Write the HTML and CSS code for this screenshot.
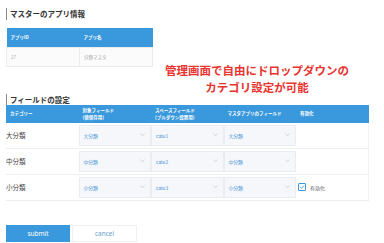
FILE: index.html
```html
<!DOCTYPE html>
<html lang="ja">
<head>
<meta charset="utf-8">
<link rel="stylesheet" href="styles.css">
</head>
<body>
<div class="page">
  <h2 class="section-title first">マスターのアプリ情報</h2>
  <table class="info-table">
    <thead>
      <tr><th>アプリID</th><th>アプリ名</th></tr>
    </thead>
    <tbody>
      <tr><td>27</td><td>分類マスタ</td></tr>
    </tbody>
  </table>

  <p class="callout">管理画面で自由にドロップダウンの<br>カテゴリ設定が可能</p>

  <h2 class="section-title second">フィールドの設定</h2>
  <table class="field-table">
    <thead>
      <tr>
        <th>カテゴリー</th>
        <th>対象フィールド<br>(値保存用)</th>
        <th>スペースフィールド<br>(プルダウン設置用)</th>
        <th>マスタアプリのフィールド</th>
        <th>有効化</th>
      </tr>
    </thead>
    <tbody>
      <tr>
        <td class="label">大分類</td>
        <td><div class="select"><span>大分類</span><svg class="chev" viewBox="0 0 6 4"><polyline points="0.5,0.5 3,3.2 5.5,0.5"/></svg></div></td>
        <td><div class="select"><span>cate1</span><svg class="chev" viewBox="0 0 6 4"><polyline points="0.5,0.5 3,3.2 5.5,0.5"/></svg></div></td>
        <td><div class="select"><span>大分類</span><svg class="chev" viewBox="0 0 6 4"><polyline points="0.5,0.5 3,3.2 5.5,0.5"/></svg></div></td>
        <td></td>
      </tr>
      <tr>
        <td class="label">中分類</td>
        <td><div class="select"><span>中分類</span><svg class="chev" viewBox="0 0 6 4"><polyline points="0.5,0.5 3,3.2 5.5,0.5"/></svg></div></td>
        <td><div class="select"><span>cate2</span><svg class="chev" viewBox="0 0 6 4"><polyline points="0.5,0.5 3,3.2 5.5,0.5"/></svg></div></td>
        <td><div class="select"><span>中分類</span><svg class="chev" viewBox="0 0 6 4"><polyline points="0.5,0.5 3,3.2 5.5,0.5"/></svg></div></td>
        <td></td>
      </tr>
      <tr>
        <td class="label">小分類</td>
        <td><div class="select"><span>小分類</span><svg class="chev" viewBox="0 0 6 4"><polyline points="0.5,0.5 3,3.2 5.5,0.5"/></svg></div></td>
        <td><div class="select"><span>cate3</span><svg class="chev" viewBox="0 0 6 4"><polyline points="0.5,0.5 3,3.2 5.5,0.5"/></svg></div></td>
        <td><div class="select"><span>小分類</span><svg class="chev" viewBox="0 0 6 4"><polyline points="0.5,0.5 3,3.2 5.5,0.5"/></svg></div></td>
        <td>
          <div class="check-wrap">
            <span class="checkbox"><svg viewBox="0 0 8 8"><polyline points="1.6,4.2 3.3,5.8 6.4,2.2"/></svg></span>
            <span class="check-label">有効化</span>
          </div>
        </td>
      </tr>
    </tbody>
  </table>

  <div class="actions">
    <button class="btn btn-submit" type="button">submit</button>
    <button class="btn btn-cancel" type="button">cancel</button>
  </div>
</div>
</body>
</html>
```

FILE: styles.css
```css
* { box-sizing: border-box; }

html, body {
  margin: 0;
  padding: 0;
  background: #ffffff;
}

body {
  font-family: "Noto Sans CJK JP", "Noto Sans", "Liberation Sans", sans-serif;
  color: #333333;
}

.page {
  position: relative;
  width: 384px;
  height: 243px;
  padding: 0 6px;
  overflow: hidden;
}

.section-title {
  margin: 0;
  border-left: 1.5px solid #8a8a8a;
  padding-left: 3px;
  font-size: 7.5px;
  line-height: 12px;
  height: 12px;
  font-weight: bold;
  color: #333333;
}

.section-title.first {
  margin-top: 8px;
}

.section-title.second {
  margin-top: 27px;
  height: 11px;
  line-height: 11px;
}

table {
  border-collapse: collapse;
  table-layout: fixed;
}

.info-table {
  margin-top: 8px;
  width: 146px;
}

.info-table th,
.info-table td {
  width: 73px;
  text-align: left;
  padding: 0 0 0 4px;
}

.info-table th {
  background: #3a98dc;
  color: #ffffff;
  font-size: 4.5px;
  font-weight: bold;
  height: 19px;
}

.info-table td {
  height: 19px;
  font-size: 4.5px;
  color: #a9a9a9;
  background: #fbfbfb;
  border: 1px solid #ebebeb;
}

.callout {
  position: absolute;
  left: 150px;
  top: 62px;
  width: 214px;
  margin: 0;
  text-align: center;
  color: #e8332f;
  font-size: 11.5px;
  line-height: 17px;
  font-weight: bold;
}

.field-table {
  margin-top: 0;
  width: 363px;
}

.field-table th {
  background: #3a98dc;
  color: #ffffff;
  font-size: 4.5px;
  font-weight: bold;
  line-height: 7px;
  height: 18px;
  text-align: left;
  padding: 0 0 0 4px;
  vertical-align: middle;
}

.field-table td {
  height: 25px;
  padding: 2px 0;
  border-bottom: 1px solid #eeeeee;
  vertical-align: middle;
}

.field-table td:last-child {
  border-right: 1px solid #f2f2f2;
}

.field-table td.label {
  font-size: 6.5px;
  color: #444444;
  padding-left: 0;
}

.select {
  display: flex;
  align-items: center;
  justify-content: space-between;
  height: 21px;
  padding: 0 4px;
  background: #f5f7fa;
  border: 1px solid #e9edf1;
  font-size: 4.8px;
  color: #3a8fd6;
}

.chev {
  width: 5px;
  height: 3.5px;
  fill: none;
  stroke: #a7b3bf;
  stroke-width: 0.6;
  margin-right: 1px;
}

.check-wrap {
  display: flex;
  align-items: center;
  padding-left: 2px;
}

.checkbox {
  display: inline-flex;
  width: 8px;
  height: 8px;
  border: 1px solid #3a98dc;
  background: #ffffff;
  border-radius: 1px;
}

.checkbox svg {
  width: 6px;
  height: 6px;
  fill: none;
  stroke: #3a98dc;
  stroke-width: 1.2;
}

.check-label {
  margin-left: 4px;
  font-size: 5px;
  color: #555555;
}

.actions {
  display: flex;
  gap: 2px;
  margin-top: 24px;
}

.btn {
  height: 17px;
  font-family: "Noto Sans", "Liberation Sans", sans-serif;
  font-size: 6.5px;
  padding: 0;
  border-radius: 0;
  cursor: pointer;
}

.btn-submit {
  width: 64px;
  background: #3a98dc;
  color: #ffffff;
  border: 1px solid #3a98dc;
}

.btn-cancel {
  width: 65px;
  background: #ffffff;
  color: #6a9fd0;
  border: 1px solid #f0f0f0;
}
```
